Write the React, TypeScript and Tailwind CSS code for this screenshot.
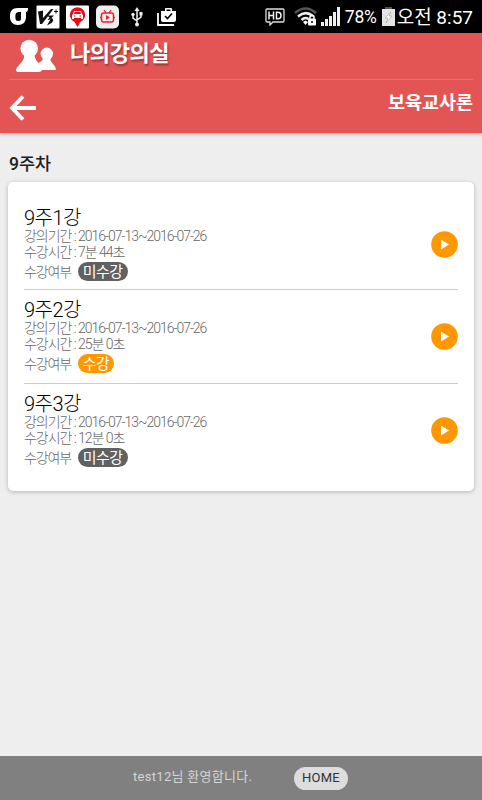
import React from "react";

type Lesson = { title: string; period: string; time: string; status: string; done: boolean };

const lessons: Lesson[] = [
  { title: "9주1강", period: "2016-07-13~2016-07-26", time: "7분 44초", status: "미수강", done: false },
  { title: "9주2강", period: "2016-07-13~2016-07-26", time: "25분 0초", status: "수강", done: true },
  { title: "9주3강", period: "2016-07-13~2016-07-26", time: "12분 0초", status: "미수강", done: false },
];

function StatusBar() {
  return (
    <div className="flex h-[33px] items-center bg-black pl-[9px] pr-[9px] text-white">
      <svg className="mr-[7px] h-[20px] w-[20px] shrink-0" viewBox="0 0 20 20">
        <path d="M19 1H9C3 1 1 4 1 9.500C1 15 4 18 9 18S17 15 17 10V5C18.500 5 19 3.500 19 1ZM12 5V11.500Q12 14 9.200 14T6.400 11V8.500Q6.400 5 10 5Z" fill="#fff" fillRule="evenodd" />
      </svg>
      <svg className="mr-[6px] h-[24px] w-[24px] shrink-0" viewBox="0 0 24 24">
        <rect x=".5" y=".5" width="23" height="23" rx="1" fill="#fff" />
        <path d="M2 6.500L7 5.500V13L15 4H17.500L6 19H4ZM11 10.500H18L15.500 13Q19 15 15.500 18L11 20.500L13.500 16L14.500 14.500L11.500 15L13.500 12.500Z" fill="#111" />
        <path d="M18 6.500H22M20 4.500V8.500" stroke="#111" />
      </svg>
      <svg className="mr-[7px] h-[24px] w-[23px] shrink-0" viewBox="0 0 23 24">
        <rect y=".5" width="23" height="23" rx="1" fill="#fff" />
        <path d="M11.500 22L8.500 17A7.700 7.700 0 1 1 14.500 17Z" fill="#e60d18" />
        <path d="M8 6H15L16 9L17 10V14H15V13H8V14H6V10L7 9ZM8.500 7L8 9H15L14.500 7Z" fill="#fff" fillRule="evenodd" />
        <path d="M8 11H9.500M13.500 11H15" stroke="#e60d18" />
      </svg>
      <svg className="mr-[12px] h-[24px] w-[23px] shrink-0" viewBox="0 0 23 24">
        <rect y=".5" width="23" height="23" rx="5" fill="#eee" />
        <rect x="5.500" y="8" width="12" height="9" rx="2" fill="none" stroke="#ed202d" strokeWidth="1.500" />
        <path d="M8 5L10 8M15 5L13 8M4 12.500H5M18 12.500H19" stroke="#ed202d" strokeWidth="1.300" />
        <path d="M10 10V15L14 12.500Z" fill="#ed202d" />
      </svg>
      <svg className="mr-[14px] h-[20px] w-[12px] shrink-0" viewBox="0 0 12 20" fill="none" stroke="#eee" strokeWidth="1.500">
        <path d="M6 3V17M2 8V11L6 14M10 7V10L6 13" />
        <path d="M3.500 4L6 0L8.500 4ZM8.500 5H11.500V8.500H8.500Z" fill="#eee" stroke="none" />
        <circle cx="2" cy="7.500" r="1.700" fill="#eee" stroke="none" />
        <circle cx="6" cy="17.500" r="2" fill="#eee" stroke="none" />
      </svg>
      <svg className="h-[20px] w-[21px] shrink-0" viewBox="0 0 21 20">
        <path d="M1 6V18H17" fill="none" stroke="#fff" strokeWidth="1.800" />
        <path d="M4 4H8V2Q8 1 9 1H14Q15 1 15 2V4H19V13Q19 15 17 15H6Q4 15 4 13ZM9.500 2.500V4H13.500V2.500Z" fill="#fff" fillRule="evenodd" />
        <path d="M8 9L10.500 11.500L15 6.500" fill="none" stroke="#000" strokeWidth="1.600" />
      </svg>
      <div className="ml-auto flex items-center">
        <svg className="mr-[8px] h-[18px] w-[21px]" viewBox="0 0 21 18">
          <path d="M2 1H18Q19 1 19 2V13Q19 14 18 14H8L5 17V14H2Q1 14 1 13V2Q1 1 2 1Z" fill="none" stroke="#ddd" strokeWidth="1.300" />
          <path d="M4 3.500V11.500M8.500 3.500V11.500M4 7.500H8.500M11.500 4.200H13Q16 4.200 16 7.500T13 10.800H11.500Z" fill="none" stroke="#eee" strokeWidth="1.500" />
        </svg>
        <svg className="mr-[4px] h-[20px] w-[23px]" viewBox="0 0 23 20" fill="none" strokeWidth="2.500">
          <path d="M1 6Q11.500 -3 22 6" stroke="#555" />
          <path d="M4 9.500Q11.500 3 19 9M7.500 13Q11 9.500 14.500 12" stroke="#eee" />
          <path d="M9 15L11.500 13.500L14 15L11.500 18Z" fill="#fff" />
          <rect x="14" y="11.500" width="8" height="7" rx="1" fill="#fff" />
          <path d="M16 12V10Q16 8.500 18 8.500T20 10V12" stroke="#fff" strokeWidth="1.500" />
          <path d="M18 14V16" stroke="#000" strokeWidth="1.500" />
        </svg>
        <svg className="mr-[5px] h-[20px] w-[19px]" viewBox="0 0 19 20" fill="#eee">
          <path d="M0 15H3V19H0ZM4 12H7V19H4ZM8 9H11V19H8ZM12 5H15V19H12ZM16 0H19V19H16Z" />
        </svg>
        <span className="mr-[5px] pt-px text-[17.5px] leading-[33px] tracking-[-0.2px]">78%</span>
        <svg className="mr-[2px] h-[20px] w-[13px]" viewBox="0 0 13 20">
          <path d="M3 0H10V2H13V7H0V2H3Z" fill="#555" />
          <path d="M0 2H13V19H0Z" fill="#e4e4e4" />
          <path d="M9 5L3 11H6L4 16L10 9H7Z" fill="#fff" stroke="#aaa" strokeWidth=".7" />
        </svg>
        <span className="whitespace-nowrap pt-px text-[19px] leading-[33px]">오전 8:57</span>
      </div>
    </div>
  );
}

function Header() {
  return (
    <header className="relative h-[100px] bg-[#e35555] px-[9px] text-white shadow-[0_1px_4px_rgba(0,0,0,0.3)]">
      <div className="flex h-[47px] border-b border-[#e96f6f]">
        <svg className="ml-[6px] mt-[6px] h-[35px] w-[42px]" viewBox="0 0 42 35" fill="#fff">
          <circle cx="14.200" cy="9.500" r="8.800" />
          <path d="M9 15H19.500Q19 19 24 25Q27 29 27 31Q26 33 24 33H3Q1 33 1 31Q1 29 5 25Q10 20 9 15Z" />
          <circle cx="31.800" cy="14.800" r="6.200" />
          <path d="M28.500 18H35Q35 22 38 25Q41 28 41 31H26Q26 28 23 24Q28 22 28.500 18Z" />
        </svg>
        <h1 className="ml-[13px] text-[22px] font-bold leading-[41px] tracking-[-0.4px] [text-shadow:1px_2px_2px_rgba(0,0,0,0.35)]">나의강의실</h1>
      </div>
      <div className="flex h-[53px] items-center justify-between">
        <svg className="mt-[2px] h-[26px] w-[28px]" viewBox="0 0 28 26" fill="none" stroke="#fff" strokeWidth="3.800">
          <path d="M14 1.500L3 13L14 24.500M3 13H27" />
        </svg>
        <span className="mb-[7px] text-[18.500px] font-bold leading-6">보육교사론</span>
      </div>
    </header>
  );
}

function LessonRow({ lesson, first, last }: { lesson: Lesson; first: boolean; last: boolean }) {
  return (
    <li className={`flex justify-between border-[#ccc] ${first ? "h-[84px]" : "h-[94px] pt-[8px]"} ${last ? "" : "border-b"}`}>
      <div className="text-[14px] font-light text-[#666]">
        <h3 className="mt-[2px] h-[20px] text-[20px] leading-[20px] tracking-[-0.5px] text-black">{lesson.title}</h3>
        <p className="h-4 whitespace-nowrap leading-4 tracking-[-1.03px]">강의기간 : {lesson.period}</p>
        <p className="h-4 whitespace-nowrap leading-4 tracking-[-1.03px]">수강시간 : {lesson.time}</p>
        <div className="mt-[2px] flex items-center leading-5 tracking-[-1.1px]">
          <span>수강여부</span>
          <span className={`ml-[6.5px] h-[19px] self-start rounded-full px-[5px] text-[15px] font-normal leading-[20px] tracking-[-0.5px] text-white ${lesson.done ? "bg-[#ff9800]" : "bg-[#616161]"}`}>{lesson.status}</span>
        </div>
      </div>
      <svg className="mt-[25px] h-[27px] w-[27px]" viewBox="0 0 27 27">
        <circle cx="13.500" cy="13.500" r="13.300" fill="#ff9800" />
        <path d="M10 8.500V18.500L18 13.500Z" fill="#fff" />
      </svg>
    </li>
  );
}

export default function App() {
  return (
    <div className="flex h-[800px] w-[482px] flex-col overflow-hidden bg-[#eee] font-[Roboto,'Noto_Sans_CJK_KR',sans-serif]">
      <StatusBar />
      <Header />
      <main className="flex-1 px-2 pt-[19px]">
        <h2 className="ml-px h-[30px] text-[17.5px] font-medium leading-[25px] text-[#212121]">9주차</h2>
        <ul className="h-[309px] rounded-[5px] bg-white px-4 pt-[24px] shadow-[0_1px_4px_rgba(0,0,0,0.25)]">
          {lessons.map((lesson, i) => (
            <LessonRow key={lesson.title} lesson={lesson} first={i === 0} last={i === lessons.length - 1} />
          ))}
        </ul>
      </main>
      <footer className="flex h-[44px] items-center bg-[#808080] pl-[133px] text-[13px] text-[#d5d5d5]">
        <span className="w-[161px] whitespace-nowrap pb-[2px] tracking-[0.3px]">test12님 환영합니다.</span>
        <button className="h-[23px] w-[54px] rounded-full bg-[#ddd] pb-[2px] text-[13px] leading-[21px] tracking-[0.2px] text-[#333]">HOME</button>
      </footer>
    </div>
  );
}
